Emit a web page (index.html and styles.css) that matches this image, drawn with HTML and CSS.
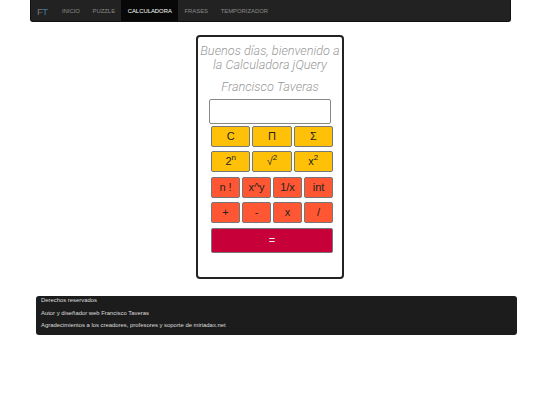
FILE: index.html
```html
<!DOCTYPE html>
<html lang="en">
<head>
    <meta charset="UTF-8">
    <meta name="viewport" content="width=device-width, initial-scale=1.0">
    <title>Calculadora jQuery</title>
    <link rel="stylesheet" href="styles.css">
</head>
<body>
    <nav class="navbar">
        <a class="brand" href="#"><span class="brand-f">F</span><span class="brand-t">T</span></a>
        <a class="nav-link" href="#">INICIO</a>
        <a class="nav-link" href="#">PUZZLE</a>
        <a class="nav-link active" href="#">CALCULADORA</a>
        <a class="nav-link" href="#">FRASES</a>
        <a class="nav-link" href="#">TEMPORIZADOR</a>
    </nav>

    <section class="calc">
        <h2>Buenos días, bienvenido a la Calculadora jQuery</h2>
        <h3>Francisco Taveras</h3>
        <input class="screen" type="text">

        <div class="row row-3">
            <button class="btn amber">C</button>
            <button class="btn amber">Π</button>
            <button class="btn amber">Σ</button>
        </div>
        <div class="row row-3">
            <button class="btn amber">2<sup>n</sup></button>
            <button class="btn amber">√<sup>2</sup></button>
            <button class="btn amber">x<sup>2</sup></button>
        </div>
        <div class="row row-4">
            <button class="btn orange">n !</button>
            <button class="btn orange">x^y</button>
            <button class="btn orange">1/x</button>
            <button class="btn orange">int</button>
        </div>
        <div class="row row-4">
            <button class="btn orange">+</button>
            <button class="btn orange">-</button>
            <button class="btn orange">x</button>
            <button class="btn orange">/</button>
        </div>
        <button class="btn equals">=</button>
    </section>

    <footer>
        <p>Derechos reservados</p>
        <p>Autor y diseñador web Francisco Taveras</p>
        <p>Agradecimientos a los creadores, profesores y soporte de miriadax.net</p>
    </footer>
</body>
</html>
```

FILE: styles.css
```css
* {
    margin: 0;
    padding: 0;
    box-sizing: border-box;
}

body {
    font-family: "Liberation Sans", Arial, sans-serif;
    background-color: #fff;
}

/* Navbar */
.navbar {
    display: flex;
    width: 481px;
    height: 22px;
    margin-left: 30px;
    background-color: #222;
    border: 1px solid #111;
    border-top: none;
    border-radius: 0 0 3px 3px;
}

.brand {
    width: 18.6px;
    margin-left: 6px;
    font-size: 9.5px;
    line-height: 24px;
    text-decoration: none;
    letter-spacing: -0.5px;
}

.brand-f {
    color: #777;
}

.brand-t {
    color: #3a7ca5;
}

.nav-link {
    padding: 0 6.3px;
    color: #8a8a8a;
    font-size: 5.9px;
    line-height: 23px;
    text-decoration: none;
}

.nav-link.active {
    color: #fff;
    background-color: #080808;
}

/* Calculator */
.calc {
    width: 148px;
    height: 244px;
    margin: 13px 0 0 196px;
    padding-top: 7px;
    background-color: #fff;
    border: 2px solid #222;
    border-radius: 4px;
    text-align: center;
}

.calc h2,
.calc h3 {
    font-family: Roboto, sans-serif;
    font-style: italic;
    font-weight: 300;
    font-size: 12.7px;
    line-height: 14px;
    color: #999;
}

.calc h3 {
    margin-top: 8px;
}

.screen {
    display: block;
    width: 122px;
    height: 25px;
    margin: 5px 0 2px 11px;
    background-color: #fff;
    border: 1px solid #888;
    border-radius: 2px;
}

.row {
    display: grid;
    gap: 2px;
    width: 122px;
    margin: 0 0 4.4px 13px;
}

.row-3 {
    grid-template-columns: repeat(3, 1fr);
}

.row-4 {
    grid-template-columns: repeat(4, 1fr);
}

.btn {
    height: 21px;
    font-family: "Liberation Sans", Arial, sans-serif;
    font-size: 11px;
    line-height: 1;
    color: #222;
    border: 1px solid #777;
    border-radius: 2px;
}

.btn sup {
    font-size: 8px;
    line-height: 0;
}

.amber {
    background-color: #ffc107;
}

.orange {
    background-color: #ff5733;
}

.equals {
    display: block;
    width: 122px;
    height: 25px;
    margin-left: 13px;
    color: #eee;
    background-color: #c70039;
}

/* Footer */
footer {
    width: 481px;
    height: 39px;
    margin: 17px 0 0 36px;
    padding: 1px 5px;
    background-color: #1c1c1c;
    border-radius: 3px;
    color: #ddd;
    font-size: 5.9px;
}

footer p {
    line-height: 7px;
    margin-bottom: 5.5px;
}
```
